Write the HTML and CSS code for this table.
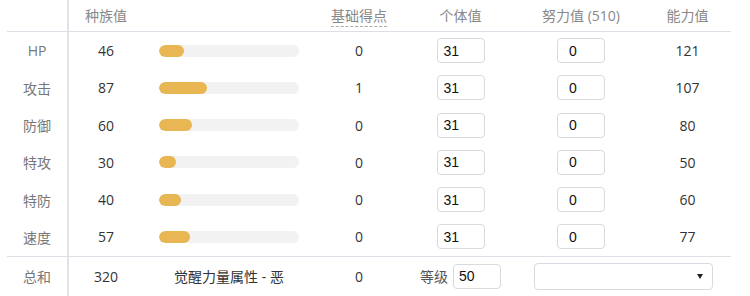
FILE: index.html
```html
<!DOCTYPE html>
<html lang="zh">
<head>
<meta charset="utf-8">
<link rel="stylesheet" href="styles.css">
</head>
<body>
<div class="stats">
  <div class="row head">
    <div class="c lab"></div>
    <div class="c">种族值</div>
    <div class="c"></div>
    <div class="c"><span class="dotted">基础得点</span></div>
    <div class="c">个体值</div>
    <div class="c">努力值 (510)</div>
    <div class="c">能力值</div>
  </div>
  <div class="body">
    <div class="row">
      <div class="c lab">HP</div><div class="c num">46</div>
      <div class="c"><div class="track"><div class="fill" style="width:25.3px"></div></div></div>
      <div class="c num">0</div>
      <div class="c"><input class="box iv" value="31"></div>
      <div class="c"><input class="box ev" value="0"></div>
      <div class="c num">121</div>
    </div>
    <div class="row">
      <div class="c lab">攻击</div><div class="c num">87</div>
      <div class="c"><div class="track"><div class="fill" style="width:47.8px"></div></div></div>
      <div class="c num">1</div>
      <div class="c"><input class="box iv" value="31"></div>
      <div class="c"><input class="box ev" value="0"></div>
      <div class="c num">107</div>
    </div>
    <div class="row">
      <div class="c lab">防御</div><div class="c num">60</div>
      <div class="c"><div class="track"><div class="fill" style="width:32.9px"></div></div></div>
      <div class="c num">0</div>
      <div class="c"><input class="box iv" value="31"></div>
      <div class="c"><input class="box ev" value="0"></div>
      <div class="c num">80</div>
    </div>
    <div class="row">
      <div class="c lab">特攻</div><div class="c num">30</div>
      <div class="c"><div class="track"><div class="fill" style="width:16.5px"></div></div></div>
      <div class="c num">0</div>
      <div class="c"><input class="box iv" value="31"></div>
      <div class="c"><input class="box ev" value="0"></div>
      <div class="c num">50</div>
    </div>
    <div class="row">
      <div class="c lab">特防</div><div class="c num">40</div>
      <div class="c"><div class="track"><div class="fill" style="width:22px"></div></div></div>
      <div class="c num">0</div>
      <div class="c"><input class="box iv" value="31"></div>
      <div class="c"><input class="box ev" value="0"></div>
      <div class="c num">60</div>
    </div>
    <div class="row">
      <div class="c lab">速度</div><div class="c num">57</div>
      <div class="c"><div class="track"><div class="fill" style="width:31.3px"></div></div></div>
      <div class="c num">0</div>
      <div class="c"><input class="box iv" value="31"></div>
      <div class="c"><input class="box ev" value="0"></div>
      <div class="c num">77</div>
    </div>
  </div>
  <div class="row foot">
    <div class="c lab">总和</div>
    <div class="c num">320</div>
    <div class="c num">觉醒力量属性 - 恶</div>
    <div class="c num">0</div>
    <div class="c"><span class="lvl">等级</span><input class="box lv" value="50"></div>
    <div class="c span2"><div class="select"><span class="arrow"></span></div></div>
  </div>
</div>
</body>
</html>
```
FILE: styles.css
```css
html, body {
  margin: 0;
  padding: 0;
  background: #fff;
}
body {
  font-family: "Open Sans", "Noto Sans CJK SC", sans-serif;
  font-size: 14px;
  color: #333;
}
.stats {
  padding-left: 7px;
  width: 724px;
}
.row {
  display: grid;
  grid-template-columns: 62px 74px 172px 88px 115px 126px 87px;
  height: 37.25px;
  align-items: stretch;
}
.c {
  display: flex;
  align-items: center;
  justify-content: center;
  white-space: nowrap;
}
.lab {
  border-right: 2px solid #e2e2ea;
  color: #777;
  padding-right: 0;
}
.head {
  height: 31px;
  border-bottom: 1px solid #dedee6;
  color: #888;
}
.head .c {
  padding-bottom: 1px;
}
.dotted {
  border-bottom: 1px dashed #aaa;
  line-height: 18px;
  padding-bottom: 1px;
  margin-top: 4px;
}
.body {
  border-bottom: 1px solid #dedee6;
}
.foot {
  height: 40px;
}
.foot .c {
  padding-bottom: 1px;
}
.num {
  color: #333;
}
.track {
  width: 140px;
  height: 12px;
  border-radius: 6px;
  background: #f2f2f2;
  overflow: hidden;
}
.fill {
  height: 100%;
  border-radius: 6px;
  background: #e8b652;
}
.box {
  box-sizing: border-box;
  width: 48px;
  height: 25px;
  border: 1px solid #d9d9de;
  border-radius: 4px;
  font-family: "Liberation Sans", Arial, sans-serif;
  font-size: 14px;
  color: #111;
  padding: 0 0 0 6px;
  margin: 0;
  outline: none;
  background: #fff;
}
.ev {
  padding-left: 11px;
}
.lv {
  padding-left: 5px;
}
.lvl {
  color: #555;
  margin-right: 5px;
}
.span2 {
  grid-column: span 2;
  justify-content: flex-start;
  padding-left: 16px;
}
.select {
  box-sizing: border-box;
  width: 179px;
  height: 27px;
  border: 1px solid #d9d9de;
  border-radius: 4px;
  display: flex;
  align-items: center;
  justify-content: flex-end;
  padding-right: 9px;
}
.arrow {
  width: 0;
  height: 0;
  border-left: 3px solid transparent;
  border-right: 3px solid transparent;
  border-top: 5px solid #222;
}
```
